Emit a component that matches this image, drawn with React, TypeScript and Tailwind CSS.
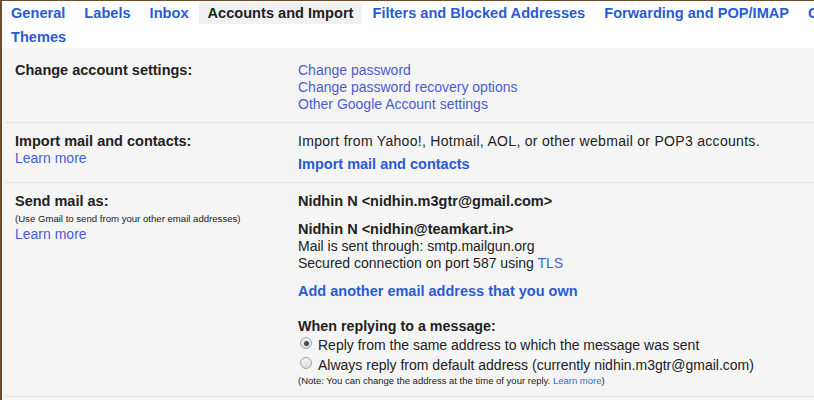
import clsx from "clsx";

const tabs = [
  "General",
  "Labels",
  "Inbox",
  "Accounts and Import",
  "Filters and Blocked Addresses",
  "Forwarding and POP/IMAP",
  "Offline",
  "Themes",
];

const Radio = ({ checked }: { checked?: boolean }) => (
  <span className="mt-[2px] ml-[2px] mr-[6px] flex h-[12px] w-[12px] shrink-0 items-center justify-center rounded-full border border-[#a3a3a3] bg-gradient-to-b from-[#f4f4f4] to-[#dcdcdc]">
    {checked && <span className="h-[5px] w-[5px] rounded-full bg-[#4a4a4a]" />}
  </span>
);

export default function App() {
  return (
    <div
      className="h-screen w-screen overflow-hidden bg-white text-[14px] leading-[17px] text-[#222]"
      style={{ fontFamily: '"Liberation Sans", Arial, sans-serif' }}
    >
      <div className="min-h-full w-[900px] border-l-2 border-t border-[#6e4b2c] bg-white">
        {/* tabs */}
        <nav className="flex flex-wrap gap-x-[1px] gap-y-[3px] pt-[2px]">
          {tabs.map((tab) => (
            <span
              key={tab}
              className={clsx(
                "h-[21px] px-[9px] text-[14.6px] font-bold leading-[21px] whitespace-nowrap",
                tab === "Accounts and Import"
                  ? "bg-[#f1f1f1] text-[#222]"
                  : "text-[#2a5bd7]"
              )}
            >
              {tab}
            </span>
          ))}
        </nav>

        {/* settings table */}
        <div className="bg-[#f5f5f5] pl-[3px] pb-[4px]">
          <section className="grid grid-cols-[293px_1fr] border-b border-[#e2e2e2] pt-[14px] pb-[9px]">
            <div className="pl-[10px] text-[14.5px] font-bold">Change account settings:</div>
            <div className="flex flex-col text-[#4c5cd0]">
              <span>Change password</span>
              <span>Change password recovery options</span>
              <span>Other Google Account settings</span>
            </div>
          </section>

          <section className="grid grid-cols-[293px_1fr] border-b border-[#e2e2e2] pt-[10px] pb-[9px]">
            <div className="flex flex-col pl-[10px]">
              <span className="text-[14.5px] font-bold">Import mail and contacts:</span>
              <span className="text-[#4c5cd8]">Learn more</span>
            </div>
            <div className="flex flex-col">
              <span className="tracking-[0.3px]">
                Import from Yahoo!, Hotmail, AOL, or other webmail or POP3 accounts.
              </span>
              <span className="mt-[6px] text-[14.5px] font-bold text-[#2a5bd7]">
                Import mail and contacts
              </span>
            </div>
          </section>

          <section className="grid grid-cols-[293px_1fr] border-b border-[#e2e2e2] pt-[10px] pb-[10px]">
            <div className="flex flex-col pl-[10px]">
              <span className="text-[14.5px] font-bold">Send mail as:</span>
              <span className="mt-[2px] text-[9.6px] leading-[13px]">
                (Use Gmail to send from your other email addresses)
              </span>
              <span className="mt-[1px] text-[#4c5cd8]">Learn more</span>
            </div>
            <div className="flex flex-col">
              <span className="text-[14.5px] font-bold">
                Nidhin N &lt;nidhin.m3gtr@gmail.com&gt;
              </span>
              <span className="mt-[11px] text-[14.5px] font-bold">
                Nidhin N &lt;nidhin@teamkart.in&gt;
              </span>
              <span>Mail is sent through: smtp.mailgun.org</span>
              <span>
                Secured connection on port 587 using{" "}
                <span className="text-[#3d68d8]">TLS</span>
              </span>
              <span className="mt-[11px] text-[14.5px] font-bold text-[#2a5bd7]">
                Add another email address that you own
              </span>
              <span className="mt-[18px] text-[14.3px] font-bold">When replying to a message:</span>
              <label className="flex h-[20px] items-start leading-[20px]">
                <Radio checked />
                Reply from the same address to which the message was sent
              </label>
              <label className="flex h-[20px] items-start leading-[20px]">
                <Radio />
                Always reply from default address (currently nidhin.m3gtr@gmail.com)
              </label>
              <span className="text-[9.5px] leading-[11px]">
                (Note: You can change the address at the time of your reply.{" "}
                <span className="text-[#3d68d8]">Learn more</span>)
              </span>
            </div>
          </section>
        </div>
      </div>
    </div>
  );
}
